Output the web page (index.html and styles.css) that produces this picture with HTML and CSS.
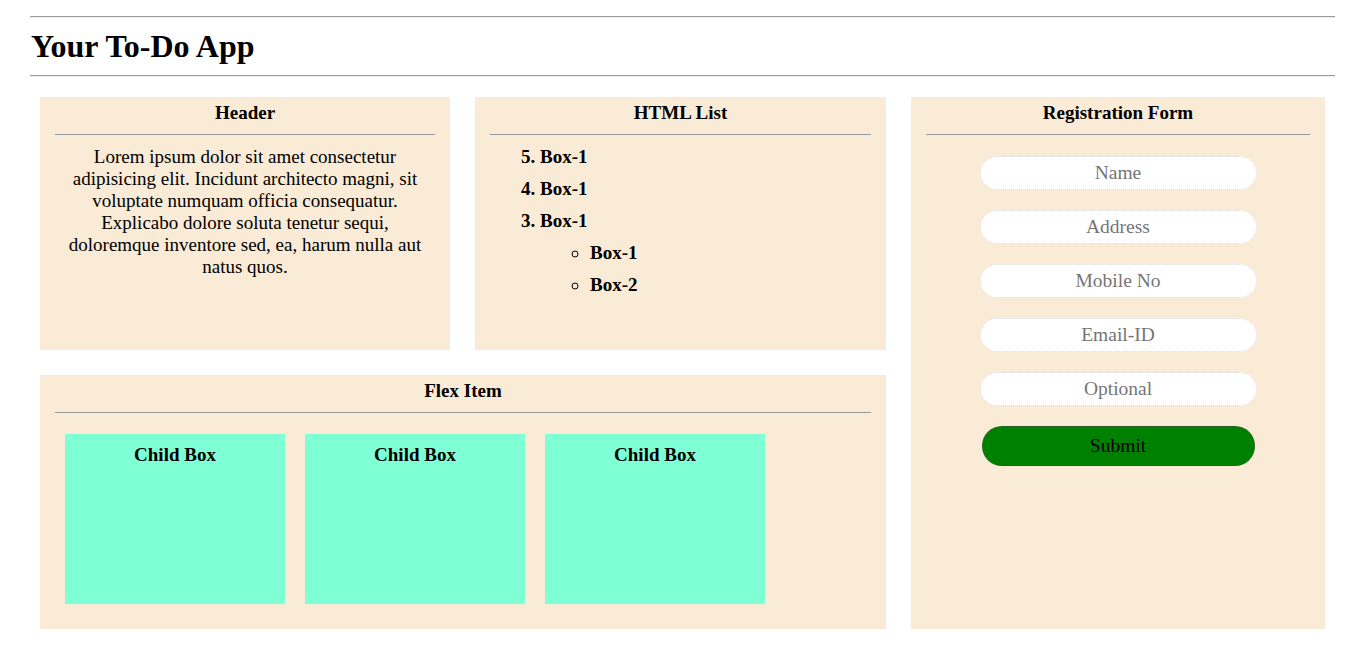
FILE: index.html
```html
<!DOCTYPE html>
<html>
<head>
<meta charset="utf-8">
<title>Your To-Do App</title>
<link rel="stylesheet" href="styles.css">
</head>
<body>
<div class="page">
  <hr class="rule">
  <h1 class="title">Your To-Do App</h1>
  <hr class="rule rule-bottom">
  <div class="grid">
    <section class="box">
      <h3 class="box-title">Header</h3>
      <hr class="box-rule">
      <p class="lorem">Lorem ipsum dolor sit amet consectetur adipisicing elit. Incidunt architecto magni, sit voluptate numquam officia consequatur. Explicabo dolore soluta tenetur sequi, doloremque inventore sed, ea, harum nulla aut natus quos.</p>
    </section>
    <section class="box">
      <h3 class="box-title">HTML List</h3>
      <hr class="box-rule">
      <ol class="list" reversed start="5">
        <li>Box-1</li>
        <li>Box-1</li>
        <li>Box-1
          <ul class="sublist">
            <li>Box-1</li>
            <li>Box-2</li>
          </ul>
        </li>
      </ol>
    </section>
    <section class="box form-box">
      <h3 class="box-title">Registration Form</h3>
      <hr class="box-rule">
      <form class="form">
        <input class="field" type="text" placeholder="Name">
        <input class="field" type="text" placeholder="Address">
        <input class="field" type="text" placeholder="Mobile No">
        <input class="field" type="text" placeholder="Email-ID">
        <input class="field" type="text" placeholder="Optional">
        <button class="submit" type="button">Submit</button>
      </form>
    </section>
    <section class="box flex-box">
      <h3 class="box-title">Flex Item</h3>
      <hr class="box-rule">
      <div class="children">
        <div class="child">Child Box</div>
        <div class="child">Child Box</div>
        <div class="child">Child Box</div>
      </div>
    </section>
  </div>
</div>
</body>
</html>
```

FILE: styles.css
```css
html, body {
  margin: 0;
  padding: 0;
  background: #ffffff;
}
body {
  font-family: "Liberation Serif", "Times New Roman", serif;
  color: #000;
}
.page {
  padding: 16px 31px 0 30px;
}
.rule {
  margin: 0;
  height: 0;
  border: 0;
  border-top: 1px solid #9a9a9a;
  border-bottom: 1px solid #eeeeee;
}
.title {
  margin: 10px 1px 10px;
  font-size: 32px;
  line-height: 37px;
  font-weight: bold;
}
.grid {
  margin: 20px 10px 0;
  display: grid;
  grid-template-columns: 410px 411px 1fr;
  grid-template-rows: 253px 254px;
  gap: 25px;
}
.box {
  background: #faebd7;
  padding: 5px 15px 0;
  box-sizing: border-box;
}
.form-box {
  grid-column: 3;
  grid-row: 1 / span 2;
}
.flex-box {
  grid-column: 1 / span 2;
  grid-row: 2;
}
.box-title {
  margin: 0;
  font-size: 19px;
  line-height: 22px;
  font-weight: bold;
  text-align: center;
}
.box-rule {
  margin: 10px 0 0;
  height: 0;
  border: 0;
  border-top: 1px solid #9a9a9a;
  border-bottom: 1px solid #eeeeee;
}
.lorem {
  margin: 10px 0 0;
  font-size: 19px;
  line-height: 22px;
  text-align: center;
}
.list {
  margin: 10px 0 0;
  padding-left: 50px;
  font-size: 19px;
  line-height: 22px;
  font-weight: bold;
}
.list li {
  margin-bottom: 10px;
}
.sublist {
  margin: 10px 0 0;
  padding-left: 50px;
  list-style-type: circle;
}
.form {
  display: flex;
  flex-direction: column;
  align-items: center;
  padding-top: 20px;
}
.field {
  width: 277px;
  height: 34px;
  box-sizing: border-box;
  margin: 0 0 20px;
  border: 1px dotted #ead3d3;
  border-radius: 17px;
  background: #ffffff;
  font-family: "Liberation Serif", "Times New Roman", serif;
  font-size: 19.5px;
  text-align: center;
  color: #333;
  outline: none;
}
.field::placeholder {
  color: #757575;
}
.submit {
  margin-top: 0;
  width: 273px;
  height: 40px;
  box-sizing: border-box;
  border: 1px dotted #1f5a1f;
  border-radius: 20px;
  background: #008000;
  color: #000;
  font-family: "Liberation Serif", "Times New Roman", serif;
  font-size: 19.5px;
}
.children {
  display: flex;
  padding-top: 10px;
}
.child {
  width: 220px;
  height: 170px;
  margin: 10px;
  box-sizing: border-box;
  padding-top: 10px;
  background: #7fffd4;
  font-size: 19px;
  line-height: 22px;
  font-weight: bold;
  text-align: center;
}
```
